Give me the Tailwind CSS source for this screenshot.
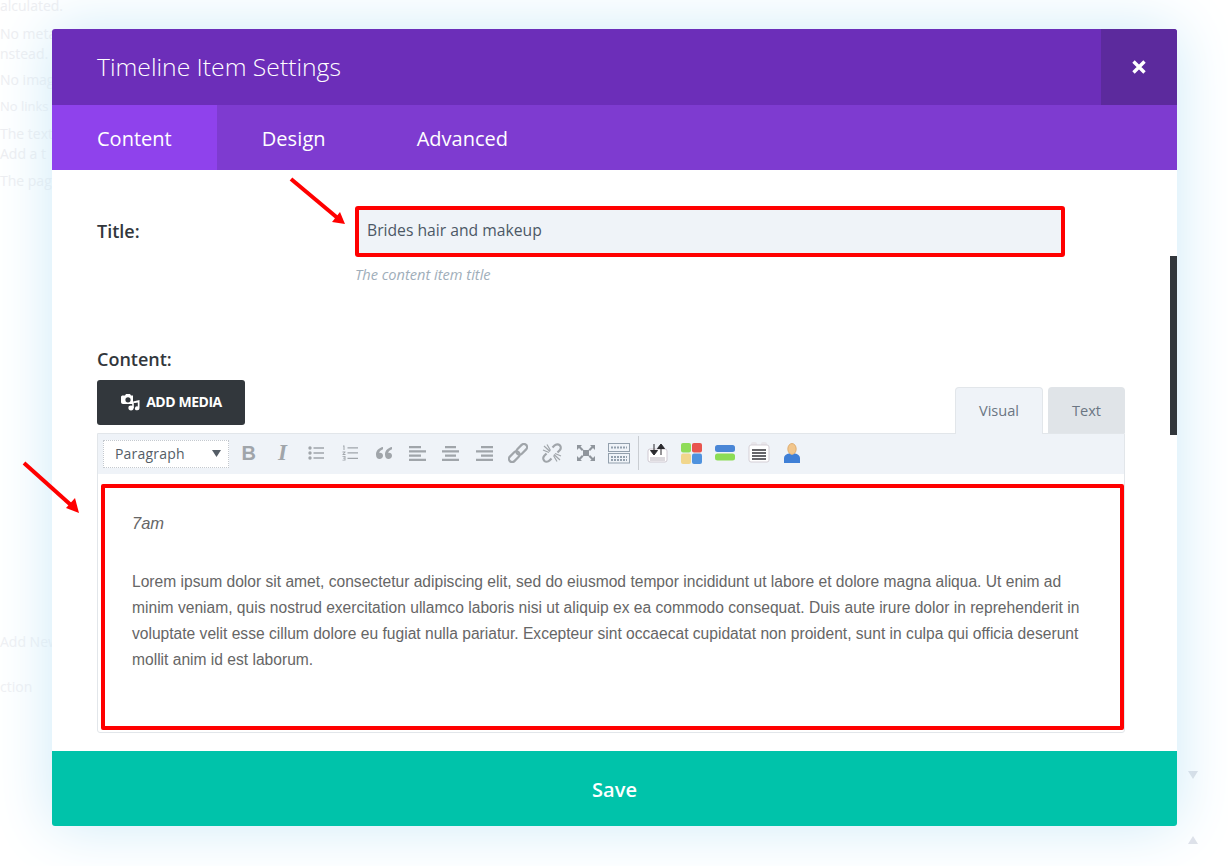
<!DOCTYPE html>
<html>
<head>
<meta charset="utf-8">
<script src="https://cdn.jsdelivr.net/npm/@tailwindcss/browser@4"></script>
</head>
<body class="bg-white">
<div class="relative w-[1228px] h-[866px] overflow-hidden bg-white font-['Open_Sans',sans-serif] pt-[29px] pl-[52px]">
  <!-- faded page behind -->
  <div class="absolute left-[0px] top-[-4px] text-[14px] leading-[20px] text-[#eeeef1] whitespace-nowrap">
    <p class="mb-[8px]">alculated.</p>
    <p>No meta</p>
    <p class="mb-[6px]">nstead.</p>
    <p class="mb-[6px]">No image</p>
    <p class="mb-[8px] text-[13px]">No links</p>
    <p>The text</p>
    <p class="mb-[7px]">Add a t</p>
    <p>The page</p>
  </div>
  <div class="absolute left-[0px] top-[632px] text-[14px] leading-[20px] text-[#f0f0f3] whitespace-nowrap">Add New</div>
  <div class="absolute left-[0px] top-[677px] text-[14px] leading-[20px] text-[#f0f0f3] whitespace-nowrap">ction</div>
  <svg class="absolute left-[1188px] top-[771px]" width="10" height="8"><path d="M0 0H10L5 8Z" fill="#d8dbe2"/></svg>
  <svg class="absolute left-[1188px] top-[836px]" width="10" height="8"><path d="M0 8H10L5 0Z" fill="#dfe1e8"/></svg>

  <!-- modal -->
  <div class="relative flex flex-col w-[1125px] h-[797px] rounded-[3px] overflow-hidden bg-white shadow-[0_0_60px_#cdeaf8]">
    <div class="flex h-[76px] bg-[#6c2eb9] shrink-0">
      <div class="flex-1 pl-[45px] text-[24.700px] font-light leading-[76px] text-white">Timeline Item Settings</div>
      <div class="flex items-center justify-center w-[76px] bg-[#5c2a9d]">
        <svg width="14" height="14" viewBox="0 0 14 14"><path d="M1.500 1.500L12.500 12.500M12.500 1.500L1.500 12.500" stroke="#fff" stroke-width="3.400" fill="none"/></svg>
      </div>
    </div>
    <div class="flex h-[65px] bg-[#7e3bd0] shrink-0 text-[20px] leading-[67px] text-white">
      <div class="px-[45px] bg-[#8f42ec]">Content</div>
      <div class="px-[45px] tracking-[0.1px]">Design</div>
      <div class="pl-[46px] pr-[45px]">Advanced</div>
    </div>

    <div class="relative flex-1 pl-[45px] pr-[52px]">
      <div class="flex pt-[36px]">
        <div class="w-[258px] text-[18px] font-semibold leading-[50px] text-[#32373c]">Title:</div>
        <div class="w-[710px]">
          <div class="h-[51px] border-[4px] border-[#ff0000] rounded-[3px] bg-[#eff3f8] pl-[8px] text-[15.700px] leading-[40px] text-[#4c5866]">Brides hair and makeup</div>
          <div class="mt-[7px] text-[14.600px] italic leading-[20px] text-[#a0aeba]">The content item title</div>
        </div>
      </div>

      <div class="mt-[63px] text-[18px] font-semibold leading-[24px] text-[#32373c]">Content:</div>
      <div class="flex items-start justify-between mt-[9px] h-[53px]">
        <div class="flex items-center justify-center gap-[6px] w-[148px] h-[45px] pb-[2px] rounded-[3px] bg-[#32373c] text-[14px] font-bold tracking-[-0.45px] text-white">
          <svg width="20" height="18" viewBox="0 0 20 18" fill="#fff"><path fill-rule="evenodd" d="M3 2.500H5L6 1H10L11 2.500H13V11H3C1.800 11 1 10 1 9V4C1 3 1.800 2.500 3 2.500ZM8 4.200A2.600 2.600 0 1 0 8 9.400A2.600 2.600 0 1 0 8 4.200Z"/><path d="M13 8.500L19.500 7V15.300A2.300 2 0 1 1 17.800 13.400V9.400L15 10V10H14Z"/><ellipse cx="11" cy="15" rx="2.600" ry="2.400"/><path d="M12.200 9H13.800V15H12.200Z"/></svg>
          <span>ADD MEDIA</span>
        </div>
        <div class="relative z-10 flex items-start gap-[5px] pt-[7px]">
          <div class="w-[88px] h-[47px] rounded-t-[4px] bg-[#eff3f8] border border-b-0 border-[#e2e6ea] text-center text-[14.600px] leading-[44px] text-[#6b7683]">Visual</div>
          <div class="w-[77px] h-[46px] rounded-t-[4px] bg-[#e0e4e8] text-center text-[14.600px] leading-[47px] text-[#6b7683]">Text</div>
        </div>
      </div>

      <div class="border border-[#e2e6ea] rounded-b-[3px] h-[300px]">
        <div class="flex items-center h-[40px] pl-[5px] bg-[#eff3f8]">
          <div class="flex items-center justify-between w-[126px] h-[28px] border border-dotted border-[#c4c9cf] bg-white pl-[11px] pr-[7px] pb-[2px] text-[14px] tracking-[0.2px] text-[#555d66]">
            <span>Paragraph</span>
            <svg width="9" height="7"><path d="M0 0H9L4.500 7Z" fill="#555d66"/></svg>
          </div>
          <div class="flex items-center ml-[3px] pb-[2px]">
            <div class="flex items-center justify-center w-[33.700px] h-[28px] text-[20px] font-bold font-['Liberation_Sans',sans-serif] text-[#a0a5aa]">B</div>
            <div class="flex items-center justify-center w-[33.700px] h-[28px] text-[23px] font-bold italic font-['Liberation_Serif',serif] text-[#a0a5aa]">I</div>
            <div class="flex items-center justify-center w-[33.700px] h-[28px]">
              <svg width="16" height="14" viewBox="0 0 16 14" fill="#a0a5aa"><circle cx="2" cy="2" r="1.700"/><circle cx="2" cy="7" r="1.700"/><circle cx="2" cy="12" r="1.700"/><path d="M5.500 1.200H16V2.700H5.500ZM5.500 6.200H16V7.700H5.500ZM5.500 11.200H16V12.700H5.500Z"/></svg>
            </div>
            <div class="flex items-center justify-center w-[33.700px] h-[28px]">
              <svg width="16" height="16" viewBox="0 0 16 16" fill="#a0a5aa"><path d="M5.500 2.200H16V3.500H5.500ZM5.500 7.200H16V8.500H5.500ZM5.500 12.700H16V14H5.500ZM1 .5H2.500V5H1.500V1.500H1ZM.5 6.500H3.500V7.300L1.800 9H3.500V10H.5V9.200L2.300 7.400H.5ZM.5 11H3.500V15.500H.5V14.700H2.500V13.600H1V12.800H2.500V11.800H.5Z"/></svg>
            </div>
            <div class="flex items-center justify-center w-[33.700px] h-[28px]">
              <svg width="18" height="14" viewBox="0 0 18 14" fill="#a0a5aa"><path d="M8 1C4 1.700 1 4.500 1 8.500C1 11.500 2.500 13 4.500 13C6.500 13 8 11.600 8 9.700C8 8 6.800 6.800 5 6.800C4.600 6.800 4.300 6.900 4.100 7C4.500 5.500 6 4 8 3.300ZM17 1C13 1.700 10 4.500 10 8.500C10 11.500 11.500 13 13.500 13C15.500 13 17 11.600 17 9.700C17 8 15.800 6.800 14 6.800C13.600 6.800 13.300 6.900 13.100 7C13.500 5.500 15 4 17 3.300Z"/></svg>
            </div>
            <div class="flex items-center justify-center w-[33.700px] h-[28px]">
              <svg width="17" height="15" viewBox="0 0 17 15" fill="#a0a5aa"><path d="M0 0H12V2.200H0ZM0 4.300H17V6.500H0ZM0 8.600H12V10.800H0ZM0 12.800H17V15H0Z"/></svg>
            </div>
            <div class="flex items-center justify-center w-[33.700px] h-[28px]">
              <svg width="17" height="15" viewBox="0 0 17 15" fill="#a0a5aa"><path d="M3 0H14V2.200H3ZM0 4.300H17V6.500H0ZM3 8.600H14V10.800H3ZM0 12.800H17V15H0Z"/></svg>
            </div>
            <div class="flex items-center justify-center w-[33.700px] h-[28px]">
              <svg width="17" height="15" viewBox="0 0 17 15" fill="#a0a5aa"><path d="M5 0H17V2.200H5ZM0 4.300H17V6.500H0ZM5 8.600H17V10.800H5ZM0 12.800H17V15H0Z"/></svg>
            </div>
            <div class="flex items-center justify-center w-[33.700px] h-[28px]">
              <svg width="20" height="20" viewBox="0 0 20 20" fill="none" stroke="#a0a5aa" stroke-width="2.200"><g transform="rotate(-45 10 10)"><rect x="-1.500" y="6.800" width="12.500" height="6.400" rx="3.200"/><rect x="9" y="6.800" width="12.500" height="6.400" rx="3.200"/></g></svg>
            </div>
            <div class="flex items-center justify-center w-[33.700px] h-[28px]">
              <svg width="20" height="20" viewBox="0 0 20 20" fill="none" stroke="#a0a5aa" stroke-width="2.200"><path d="M10.500 4.500L12.500 2.500C14 1 16.500 1 17.800 2.300C19.200 3.700 19 6 17.700 7.300L15.500 9.500"/><path d="M9.500 15.500L7.500 17.500C6 19 3.500 19 2.200 17.700C.8 16.300 1 14 2.300 12.700L4.500 10.500"/><path d="M2 3L8 8.500M5 1.500L8.500 7.500M1 7L7 9.500M18 17L12 11.500M15 18.500L11.500 12.500M19 13L13 10.500" stroke-width="1.200"/></svg>
            </div>
            <div class="flex items-center justify-center w-[33.700px] h-[28px]">
              <svg width="20" height="18" viewBox="0 0 20 18" fill="#8f959c"><rect x="7" y="6" width="6" height="6"/><path d="M1 1H6L4.500 2.500L7.500 5.500L6 7L3 4L1 6ZM19 1H14L15.500 2.500L12.500 5.500L14 7L17 4L19 6ZM1 17H6L4.500 15.500L7.500 12.500L6 11L3 14L1 12ZM19 17H14L15.500 15.500L12.500 12.500L14 11L17 14L19 12Z"/></svg>
            </div>
            <div class="flex items-center justify-center w-[33.700px] h-[28px]">
              <svg width="22" height="21" viewBox="0 0 22 21" fill="none" stroke="#93a0ad"><rect x=".5" y=".5" width="21" height="8"/><rect x=".5" y="10.500" width="21" height="9.500"/><path d="M3 4.500H19M3 14H19M3 17H19" stroke-width="2" stroke-dasharray="2 1"/></svg>
            </div>
            <div class="w-px h-[34px] bg-[#c9cdd2] ml-[2px]"></div>
            <div class="flex items-center justify-center w-[36px] h-[28px]">
              <svg width="21" height="21" viewBox="0 0 21 21"><rect x="1" y="6" width="19" height="13" rx="2" fill="#fff" stroke="#cfc9d2"/><path d="M3 15H18M3 17H18" stroke="#b9b4bd"/><path d="M7 1V8M3.500 7.500H10.500L7 12ZM14 12V5M10.500 5.500H17.500L14 1Z" fill="#2a2a2e" stroke="#2a2a2e"/></svg>
            </div>
            <div class="flex items-center justify-center w-[32px] h-[28px]">
              <svg width="21" height="21" viewBox="0 0 21 21"><rect x="0" y="0" width="10" height="9.500" rx="2" fill="#8fdc58"/><rect x="11" y="0" width="10" height="9.500" rx="2" fill="#e8554e"/><rect x="0" y="10.500" width="10" height="10.500" rx="2" fill="#f1d68c"/><rect x="11" y="10.500" width="10" height="10.500" rx="2" fill="#4f92de"/></svg>
            </div>
            <div class="flex items-center justify-center w-[36px] h-[28px]">
              <svg width="20" height="16" viewBox="0 0 20 16"><rect x="0" y="0" width="20" height="7" rx="2.500" fill="#4a86d6"/><rect x="0" y="8.500" width="20" height="7" rx="2.500" fill="#8cdc55"/></svg>
            </div>
            <div class="flex items-center justify-center w-[32px] h-[28px]">
              <svg width="22" height="22" viewBox="0 0 22 22"><rect x="3" y="0" width="6" height="5" rx="2" fill="#e8e6ea"/><rect x="13" y="0" width="6" height="5" rx="2" fill="#e8e6ea"/><rect x="1" y="3" width="20" height="17" rx="2" fill="#fff" stroke="#d5cfd6"/><path d="M4 8H18M4 11H18M4 14H18M4 17H18" stroke="#35353a" stroke-width="1.300"/></svg>
            </div>
            <div class="flex items-center justify-center w-[34px] h-[28px]">
              <svg width="18" height="21" viewBox="0 0 18 21"><ellipse cx="9" cy="6" rx="4.200" ry="5.500" fill="#f2c68c" stroke="#d9a563" stroke-width=".8"/><path d="M1 20V15C1 12.500 3.500 11 6 10.500L9 12L12 10.500C14.500 11 17 12.500 17 15V20Z" fill="#3f7fd6"/></svg>
            </div>
          </div>
        </div>
        <div class="mt-[10px] ml-[3px] h-[246px] border-[4px] border-[#ff0000] rounded-[2px] pl-[27px] pr-[36px] pt-[22px] font-['Liberation_Sans',sans-serif] text-[15.600px] leading-[26px] text-[#666666]">
          <p class="italic text-[16.500px]">7am</p>
          <p class="mt-[33px]">Lorem ipsum dolor sit amet, consectetur adipiscing elit, sed do eiusmod tempor incididunt ut labore et dolore magna aliqua. Ut enim ad minim veniam, quis nostrud exercitation ullamco laboris nisi ut aliquip ex ea commodo consequat. Duis aute irure dolor in reprehenderit in voluptate velit esse cillum dolore eu fugiat nulla pariatur. Excepteur sint occaecat cupidatat non proident, sunt in culpa qui officia deserunt mollit anim id est laborum.</p>
        </div>
      </div>

      <div class="absolute right-0 top-[86px] w-[7px] h-[179px] bg-[#32373c]"></div>
    </div>

    <div class="h-[75px] shrink-0 bg-[#00c3aa] text-center text-[20px] font-semibold leading-[77px] text-white">Save</div>
  </div>

  <!-- annotation arrows -->
  <svg class="absolute left-0 top-0 pointer-events-none" width="1228" height="866" fill="#ff0000" stroke="none">
    <path d="M291 179L337 217.500" stroke="#ff0000" stroke-width="4"/>
    <path d="M345 224L332 222L340 212Z"/>
    <path d="M24 463L72 506" stroke="#ff0000" stroke-width="4"/>
    <path d="M79 513L66 508L75 498Z"/>
  </svg>
</div>
</body>
</html>
